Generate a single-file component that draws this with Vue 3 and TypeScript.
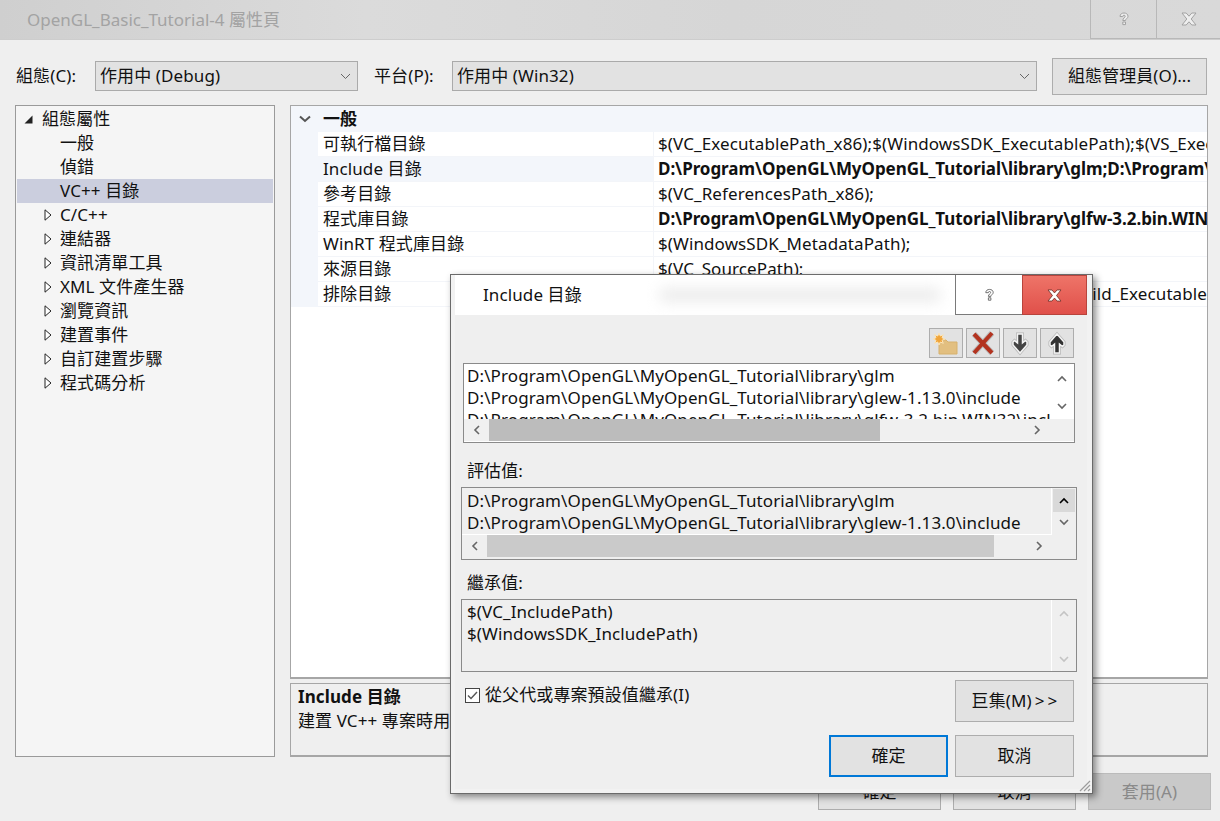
<script setup lang="ts">
const treeItems: { label: string; expandable: boolean; selected?: boolean }[] = [
  { label: '一般', expandable: false },
  { label: '偵錯', expandable: false },
  { label: 'VC++ 目錄', expandable: false, selected: true },
  { label: 'C/C++', expandable: true },
  { label: '連結器', expandable: true },
  { label: '資訊清單工具', expandable: true },
  { label: 'XML 文件產生器', expandable: true },
  { label: '瀏覽資訊', expandable: true },
  { label: '建置事件', expandable: true },
  { label: '自訂建置步驟', expandable: true },
  { label: '程式碼分析', expandable: true },
]
const rows: { name: string; value: string; bold?: boolean; active?: boolean; end?: boolean }[] = [
  { name: '可執行檔目錄', value: '$(VC_ExecutablePath_x86);$(WindowsSDK_ExecutablePath);$(VS_ExecutablePath);$(MSBuild_ExecutablePath)' },
  { name: 'Include 目錄', value: 'D:\\Program\\OpenGL\\MyOpenGL_Tutorial\\library\\glm;D:\\Program\\OpenGL\\MyOpenGL_Tutorial\\library\\glew-1.13.0\\include', bold: true, active: true },
  { name: '參考目錄', value: '$(VC_ReferencesPath_x86);' },
  { name: '程式庫目錄', value: 'D:\\Program\\OpenGL\\MyOpenGL_Tutorial\\library\\glfw-3.2.bin.WIN32\\lib-vc2015', bold: true },
  { name: 'WinRT 程式庫目錄', value: '$(WindowsSDK_MetadataPath);' },
  { name: '來源目錄', value: '$(VC_SourcePath);' },
  { name: '排除目錄', value: '$(VC_IncludePath);$(WindowsSDK_IncludePath);$(MSBuild_Executable', end: true },
]
const includeLines = [
  'D:\\Program\\OpenGL\\MyOpenGL_Tutorial\\library\\glm',
  'D:\\Program\\OpenGL\\MyOpenGL_Tutorial\\library\\glew-1.13.0\\include',
  'D:\\Program\\OpenGL\\MyOpenGL_Tutorial\\library\\glfw-3.2.bin.WIN32\\include',
]
</script>

<template>
  <div class="window">
    <header class="titlebar">
      <span class="title-text">OpenGL_Basic_Tutorial-4 屬性頁</span>
      <div class="caption-btn">
        <svg width="14" height="16" viewBox="0 0 14 16"><path d="M3 5.500C3 3 5 2 7 2s4 1 4 3.300c0 2-2.500 2.400-2.500 4.200H5.800C5.800 7 8.200 6.800 8.200 5.300 8.200 4.500 7.700 4.200 7 4.200s-1.200.4-1.200 1.300zM5.800 11h2.700v2.600H5.800z" fill="#eeeeee" stroke="#a2a2a2" stroke-width="1"/></svg>
      </div>
      <div class="caption-btn caption-close">
        <svg width="16" height="14" viewBox="0 0 16 14"><path d="M1 1h4.200L8 4.200 10.800 1H15l-4.800 6L15 13h-4.200L8 9.800 5.200 13H1l4.800-6z" fill="#eeeeee" stroke="#a2a2a2" stroke-width="1"/></svg>
      </div>
    </header>

    <div class="config-row">
      <label class="cfg-label cfg-first">組態(C):</label>
      <div class="select select-config">
        <span>作用中 (Debug)</span>
        <svg width="11" height="7" viewBox="0 0 11 7"><path d="M1 1l4.500 4.500L10 1" fill="none" stroke="#666" stroke-width="1"/></svg>
      </div>
      <label class="cfg-label cfg-second">平台(P):</label>
      <div class="select select-platform">
        <span>作用中 (Win32)</span>
        <svg width="11" height="7" viewBox="0 0 11 7"><path d="M1 1l4.500 4.500L10 1" fill="none" stroke="#666" stroke-width="1"/></svg>
      </div>
      <button class="btn cfg-manager">組態管理員(O)...</button>
    </div>

    <main class="panes">
      <nav class="tree">
        <div class="tree-row tree-root">
          <svg class="tree-arrow-root" width="9" height="9" viewBox="0 0 9 9"><path d="M8.500.5v8h-8z" fill="#222"/></svg>
          <span>組態屬性</span>
        </div>
        <div v-for="item in treeItems" :key="item.label" class="tree-row" :class="{ selected: item.selected }">
          <span class="tree-gutter">
            <svg v-if="item.expandable" width="8" height="12" viewBox="0 0 8 12"><path d="M1 .8l6 5.200-6 5.200z" fill="#fff" stroke="#222" stroke-width="1"/></svg>
          </span>
          <span>{{ item.label }}</span>
        </div>
      </nav>

      <div class="right-pane">
        <section class="grid">
          <div class="grid-head">
            <span class="grid-toggle">
              <svg width="12" height="8" viewBox="0 0 12 8"><path d="M1 1.500l5 4.500 5-4.500" fill="none" stroke="#555" stroke-width="2"/></svg>
            </span>
            <strong>一般</strong>
          </div>
          <div v-for="r in rows" :key="r.name" class="grid-row" :class="{ active: r.active }">
            <div class="grid-name">{{ r.name }}</div>
            <div class="grid-value" :class="{ bold: r.bold, 'value-end': r.end }"><span>{{ r.value }}</span></div>
          </div>
        </section>
        <section class="desc">
          <strong>Include 目錄</strong>
          <p>建置 VC++ 專案時用來搜尋 Include 檔案的路徑。</p>
        </section>
      </div>
    </main>

    <footer class="footer">
      <button class="btn foot-btn">確定</button>
      <button class="btn foot-btn">取消</button>
      <button class="btn foot-btn disabled">套用(A)</button>
    </footer>

    <!-- floating child dialog -->
    <div class="dialog">
      <div class="dlg-title">
        <div class="dlg-title-main">
          <span>Include 目錄</span>
          <i class="glass-smear"></i>
        </div>
        <div class="dlg-help">
          <svg width="13" height="16" viewBox="0 0 14 16"><path d="M3 5.500C3 3 5 2 7 2s4 1 4 3.300c0 2-2.500 2.400-2.500 4.200H5.800C5.800 7 8.200 6.800 8.200 5.300 8.200 4.500 7.700 4.200 7 4.200s-1.200.4-1.200 1.300zM5.800 11h2.700v2.600H5.800z" fill="#fff" stroke="#666" stroke-width="1"/></svg>
        </div>
        <div class="dlg-close">
          <svg width="15" height="13" viewBox="0 0 16 14"><path d="M1 1h4.200L8 4.200 10.800 1H15l-4.800 6L15 13h-4.200L8 9.800 5.200 13H1l4.800-6z" fill="#fff" stroke="#7a3a34" stroke-width="1"/></svg>
        </div>
      </div>

      <div class="dlg-body">
        <div class="toolbar">
          <button class="tool">
            <svg width="28" height="26" viewBox="0 0 28 26">
              <path d="M7 10h7l2 2h9v12H7z" fill="#e2bf80" stroke="#d7b16c" stroke-width="1"/>
              <path d="M7 3l1.300 3 3-1.300L10 7.700l3 1.300-3 1.300 1.300 3-3-1.300L7 15l-1.300-3-3 1.300L4 10.300 1 9l3-1.300-1.300-3 3 1.300z" fill="#f0a53a" stroke="#fbe6bd" stroke-width="1"/>
            </svg>
          </button>
          <button class="tool">
            <svg width="28" height="26" viewBox="0 0 28 26">
              <path d="M5 4l18 19M23 3L5 23" fill="none" stroke="#bdbdbd" stroke-width="6"/>
              <path d="M5 4l18 19M23 3L5 23" fill="none" stroke="#b3331f" stroke-width="4"/>
            </svg>
          </button>
          <button class="tool">
            <svg width="24" height="26" viewBox="0 0 24 26">
              <path d="M9.500 4h5v9l3-2.500 1.500 1.500v3l-7 8-7-8v-3l1.500-1.500 3 2.500z" fill="none" stroke="#b4b4b4" stroke-width="3"/>
              <path d="M9.500 4h5v9l3-2.500 1.500 1.500v3l-7 8-7-8v-3l1.500-1.500 3 2.500z" fill="#444" stroke="#f4f4f4" stroke-width="1.500"/>
            </svg>
          </button>
          <button class="tool">
            <svg width="24" height="26" viewBox="0 0 24 26">
              <path d="M9.500 23h5v-9l3 2.500 1.500-1.500v-3l-7-8-7 8v3l1.500 1.500 3-2.500z" fill="none" stroke="#b4b4b4" stroke-width="3"/>
              <path d="M9.500 23h5v-9l3 2.500 1.500-1.500v-3l-7-8-7 8v3l1.500 1.500 3-2.500z" fill="#333" stroke="#f4f4f4" stroke-width="1.500"/>
            </svg>
          </button>
        </div>

        <div class="box box-edit">
          <div class="box-text"><div v-for="l in includeLines" :key="l" class="line">{{ l }}</div></div>
          <div class="vscroll vscroll-edit">
            <svg width="10" height="7" viewBox="0 0 10 7"><path d="M1 6l4-4 4 4" fill="none" stroke="#666" stroke-width="1.600"/></svg>
            <svg width="10" height="7" viewBox="0 0 10 7"><path d="M1 1l4 4 4-4" fill="none" stroke="#666" stroke-width="1.600"/></svg>
          </div>
          <div class="hscroll hscroll-edit">
            <svg width="7" height="10" viewBox="0 0 7 10"><path d="M6 1L2 5l4 4" fill="none" stroke="#666" stroke-width="1.600"/></svg>
            <i class="thumb"></i>
            <svg width="7" height="10" viewBox="0 0 7 10"><path d="M1 1l4 4-4 4" fill="none" stroke="#666" stroke-width="1.600"/></svg>
          </div>
        </div>

        <div class="dlg-label label-eval">評估值:</div>
        <div class="box box-eval">
          <div class="box-text"><div v-for="l in includeLines" :key="l" class="line">{{ l }}</div></div>
          <div class="vscroll vscroll-eval">
            <span class="up-hot"><svg width="10" height="7" viewBox="0 0 10 7"><path d="M1 6l4-4 4 4" fill="none" stroke="#000" stroke-width="1.600"/></svg></span>
            <svg class="down" width="10" height="7" viewBox="0 0 10 7"><path d="M1 1l4 4 4-4" fill="none" stroke="#666" stroke-width="1.600"/></svg>
          </div>
          <div class="hscroll hscroll-eval">
            <svg width="7" height="10" viewBox="0 0 7 10"><path d="M6 1L2 5l4 4" fill="none" stroke="#666" stroke-width="1.600"/></svg>
            <i class="thumb"></i>
            <svg width="7" height="10" viewBox="0 0 7 10"><path d="M1 1l4 4-4 4" fill="none" stroke="#666" stroke-width="1.600"/></svg>
          </div>
        </div>

        <div class="dlg-label label-inherit">繼承值:</div>
        <div class="box box-inherit">
          <div class="box-text">
            <div class="line">$(VC_IncludePath)</div>
            <div class="line">$(WindowsSDK_IncludePath)</div>
          </div>
          <div class="vscroll vscroll-inherit">
            <svg width="10" height="7" viewBox="0 0 10 7"><path d="M1 6l4-4 4 4" fill="none" stroke="#c4c4c4" stroke-width="1.600"/></svg>
            <svg width="10" height="7" viewBox="0 0 10 7"><path d="M1 1l4 4 4-4" fill="none" stroke="#c4c4c4" stroke-width="1.600"/></svg>
          </div>
        </div>

        <div class="inherit-row">
          <span class="check">
            <svg width="13" height="13" viewBox="0 0 13 13"><path d="M2 6.500l3 3 6-6.500" fill="none" stroke="#555" stroke-width="1.400"/></svg>
          </span>
          <span class="check-label">從父代或專案預設值繼承(I)</span>
          <button class="btn dlg-btn macro">巨集(M) &gt; &gt;</button>
        </div>

        <div class="action-row">
          <button class="btn dlg-btn default">確定</button>
          <button class="btn dlg-btn">取消</button>
        </div>
      </div>

      <svg class="grip" width="13" height="13" viewBox="0 0 13 13"><path d="M12 2L2 12M12 6l-6 6M12 10l-2 2" stroke="#9c9c9c" stroke-width="1.200" fill="none"/></svg>
    </div>
  </div>
</template>

<style scoped>
.window {
  position: relative;
  width: 1220px;
  height: 821px;
  overflow: hidden;
  background: #efefef;
  color: #111;
  font-family: "Noto Sans", "Noto Sans CJK TC", sans-serif;
  font-size: 17px;
  letter-spacing: .1px;
  line-height: 22px;
}
.titlebar {
  height: 39px;
  display: flex;
  align-items: stretch;
  background: linear-gradient(90deg, #cfcfcf 0%, #dbdbdb 30%, #d6d6d6 60%, #d9d9d9 100%);
  border-bottom: 1px solid #cdcdcd;
  padding-left: 27px;
}
.title-text { flex: 1; color: #a3a3a3; letter-spacing: 0; line-height: 39px; }
.caption-btn {
  width: 65px;
  height: 38px;
  border-left: 1px solid #b8b8b8;
  border-bottom: 1px solid #b8b8b8;
  display: flex;
  align-items: center;
  justify-content: center;
}
.caption-close { width: 63px; }

.config-row {
  height: 65px;
  display: flex;
  align-items: center;
  padding-top: 7px;
  box-sizing: border-box;
}
.cfg-label { white-space: nowrap; }
.cfg-first { margin-left: 16px; width: 79px; }
.cfg-second { margin-left: 16px; width: 78px; }
.select {
  height: 30px;
  box-sizing: border-box;
  background: #e2e2e2;
  border: 1px solid #aaaaaa;
  display: flex;
  align-items: center;
  justify-content: space-between;
  padding: 0 6px 0 4px;
}
.select-config { width: 263px; }
.select-platform { width: 585px; }
.btn {
  font: inherit;
  letter-spacing: inherit;
  color: inherit;
  background: #e2e2e2;
  border: 1px solid #adadad;
  padding: 0;
  white-space: nowrap;
}
.cfg-manager { margin-left: 15px; width: 155px; height: 37px; }

.panes { display: flex; height: 652px; padding-left: 15px; }
.tree {
  width: 260px;
  height: 652px;
  box-sizing: border-box;
  background: #f5f5f5;
  border: 1px solid #9a9a9a;
  padding: 1px;
}
.tree-row { height: 24px; display: flex; align-items: center; padding-left: 27px; white-space: nowrap; }
.tree-row.selected { background: #cbcede; }
.tree-root { padding-left: 7px; }
.tree-arrow-root { margin-right: 9px; }
.tree-gutter { width: 16px; margin-right: 0; display: flex; align-items: center; }
.tree-gutter svg { margin-left: 0; }

.right-pane { margin-left: 15px; width: 918px; display: flex; flex-direction: column; gap: 4px; }
.grid {
  height: 574px;
  box-sizing: border-box;
  background: #fff;
  border: 1px solid #a6a6a6;
  border-bottom-width: 2px;
  overflow: hidden;
}
.grid-head { height: 26px; display: flex; align-items: center; background: #f3f6fb; }
.grid-head strong { margin-left: 4px; }
.grid-toggle { width: 28px; display: flex; justify-content: center; }
.grid-row {
  height: 25px;
  display: flex;
  background: #f3f6fb;
  padding-left: 27px;
  box-sizing: border-box;
}
.grid-name {
  width: 335px;
  padding-left: 5px;
  box-sizing: border-box;
  background: #fff;
  border-bottom: 1px solid #f3f5f9;
  white-space: nowrap;
  line-height: 24px;
}
.grid-row.active .grid-name { background: #f3f6fb; }
.grid-value {
  flex: 1;
  min-width: 0;
  padding-left: 4px;
  background: #fff;
  border-left: 1px solid #f3f5f9;
  border-bottom: 1px solid #f3f5f9;
  white-space: nowrap;
  overflow: hidden;
  line-height: 24px;
}
.grid-value.bold { font-weight: 700; letter-spacing: -.05px; }
.grid-value.value-end { display: flex; justify-content: flex-end; padding-left: 0; }
.grid-value.value-end span { flex: none; }
.desc {
  height: 74px;
  box-sizing: border-box;
  border: 1px solid #a6a6a6;
  border-bottom-width: 2px;
  padding: 1px 7px;
  overflow: hidden;
  white-space: nowrap;
  line-height: 24px;
}
.desc p { margin: 0; }

.footer { display: flex; gap: 12px; padding: 16px 0 0 818px; }
.foot-btn { width: 123px; height: 37px; }
.foot-btn.disabled { background: #c9c9c9; border-color: #bbbbbb; color: #8a8a8a; }

.dialog {
  position: absolute;
  left: 450px;
  top: 274px;
  width: 643px;
  height: 520px;
  box-sizing: border-box;
  background: #f2f2f2;
  border: 1px solid #6a6a6a;
  box-shadow: 3px 3px 7px rgba(0, 0, 0, .45);
  padding: 0 5px 5px 4px;
}
.dlg-title { height: 40px; display: flex; }
.dlg-title-main {
  position: relative;
  flex: 1;
  background: #fff;
  padding-left: 28px;
  line-height: 40px;
}
.glass-smear {
  position: absolute;
  left: 205px;
  top: 13px;
  width: 280px;
  height: 14px;
  background: #ececec;
  filter: blur(7px);
}
.dlg-help {
  width: 67px;
  box-sizing: border-box;
  background: #fff;
  border-left: 1px solid #7a7a7a;
  border-bottom: 1px solid #7a7a7a;
  display: flex;
  align-items: center;
  justify-content: center;
}
.dlg-close {
  width: 65px;
  box-sizing: border-box;
  background: linear-gradient(180deg, #ee7468, #e0504a);
  border: 1px solid #b8443c;
  display: flex;
  align-items: center;
  justify-content: center;
}
.dlg-body { height: 474px; background: #efefef; padding-left: 6px; position: relative; }
.toolbar { display: flex; justify-content: flex-end; gap: 3px; padding: 13px 13px 5px 0; box-sizing: content-box; height: 30px; }
.tool {
  width: 34px;
  height: 30px;
  padding: 0;
  background: #e2e2e2;
  border: 1px solid #adadad;
  display: flex;
  align-items: center;
  justify-content: center;
}
.box {
  position: relative;
  display: grid;
  grid-template-columns: 1fr 24px;
  border: 1px solid #8a8a8a;
  box-sizing: border-box;
  overflow: hidden;
}
.box-edit { width: 612px; height: 80px; margin-left: 2px; grid-template-rows: 55px 23px; background: #fff; }
.box-eval { width: 616px; height: 73px; grid-template-rows: 47px 23px; }
.box-inherit { width: 616px; height: 73px; grid-template-rows: 1fr; }
.box-text { padding: 1px 0 0 3px; overflow: hidden; white-space: nowrap; min-width: 0; }
.box-eval .box-text, .box-inherit .box-text { padding-left: 5px; border-right: 1px solid #fff; }
.box-eval .box-text { padding-top: 2px; border-bottom: 1px solid #fff; }
.line { height: 22px; line-height: 22px; }
.vscroll { display: flex; flex-direction: column; align-items: center; }
.vscroll-edit { gap: 21px; padding-top: 11px; background: #fff; }
.vscroll-eval { padding: 1px 1px 0 0; }
.up-hot { width: 22px; height: 23px; background: #d9d9d9; display: flex; align-items: center; justify-content: center; }
.vscroll-eval .down { margin-top: 7px; }
.vscroll-inherit { padding-top: 10px; gap: 39px; }
.hscroll { grid-column: 1 / 3; display: flex; align-items: center; }
.hscroll i { display: block; height: 100%; }
.hscroll-edit { background: #f0f0f0; padding: 0 33px 0 9px; justify-content: space-between; margin: 0 0 1px 0; }
.hscroll-edit .thumb { width: 391px; background: #bcbcbc; margin: 0 auto 0 9px; }
.hscroll-eval { padding: 0 33px 0 9px; justify-content: space-between; margin-bottom: 1px; }
.hscroll-eval .thumb { width: 507px; background: #cacaca; margin: 0 auto 0 9px; }
.label-eval { padding: 17px 0 5px 6px; }
.label-inherit { padding: 12px 0 5px 6px; }
.dlg-label { line-height: 22px; }
.inherit-row { display: flex; align-items: flex-start; padding: 8px 13px 0 4px; }
.check {
  width: 15px;
  height: 15px;
  margin-top: 8px;
  border: 1px solid #444;
  box-sizing: border-box;
  background: #fff;
  display: flex;
  align-items: center;
  justify-content: center;
  flex: none;
}
.check-label { margin: 4px 0 0 5px; flex: 1; white-space: nowrap; }
.dlg-btn { width: 119px; height: 42px; }
.macro { word-spacing: -1.500px; }
.action-row { display: flex; justify-content: flex-end; gap: 7px; padding: 13px 13px 0 0; }
.dlg-btn.default { border: 2px solid #0078d7; }
.grip { position: absolute; right: 1px; bottom: 1px; }
</style>

<style>
html, body { margin: 0; background: #efefef; }
</style>
